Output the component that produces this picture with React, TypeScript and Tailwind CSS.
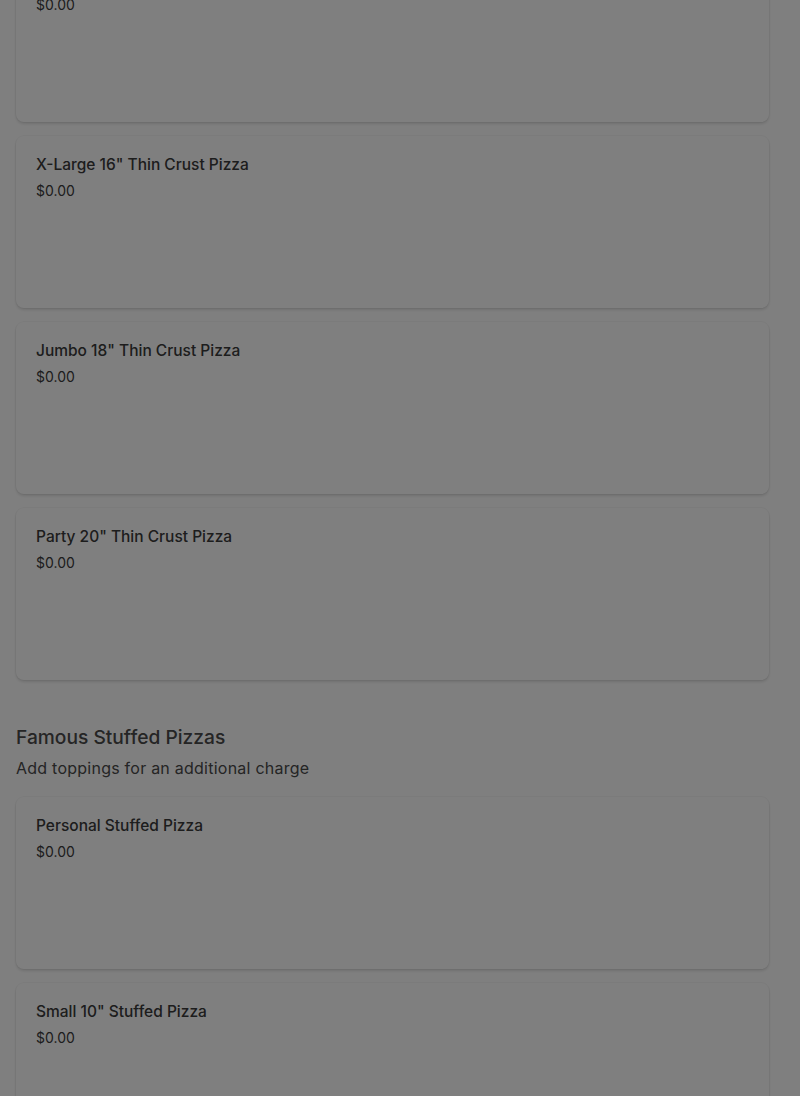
import React from 'react'

const font = { fontFamily: 'Inter, "Open Sans", sans-serif' }

interface Item {
	name: string
	price: string
}

const thinCrust: Item[] = [
	{ name: 'Large 14" Thin Crust Pizza', price: '$0.00' },
	{ name: 'X-Large 16" Thin Crust Pizza', price: '$0.00' },
	{ name: 'Jumbo 18" Thin Crust Pizza', price: '$0.00' },
	{ name: 'Party 20" Thin Crust Pizza', price: '$0.00' },
]

const stuffed: Item[] = [
	{ name: 'Personal Stuffed Pizza', price: '$0.00' },
	{ name: 'Small 10" Stuffed Pizza', price: '$0.00' },
	{ name: 'Medium 12" Stuffed Pizza', price: '$0.00' },
]

function MenuCard({ item }: { item: Item }) {
	return (
		<div className="h-[172px] rounded-lg bg-white px-5 pt-[19px] shadow-[0_2px_3px_rgba(0,0,0,0.12)] ring-1 ring-black/[0.03]">
			<div className="text-[15.5px] leading-5 font-medium text-[#3a3a3a]">{item.name}</div>
			<div className="mt-[6px] text-[14px] leading-5 text-[#3a3a3a]">{item.price}</div>
		</div>
	)
}

export default function App() {
	return (
		<div className="relative h-[1096px] overflow-hidden bg-white" style={font}>
			<div className="-mt-[50px] pl-4 pr-[31px]">
				<div className="flex flex-col gap-[14px]">
					{thinCrust.map((item) => (
						<MenuCard key={item.name} item={item} />
					))}
				</div>

				<div className="mt-[43px]">
					<h2 className="text-[19.2px] leading-7 font-medium text-[#4a4a4a]">Famous Stuffed Pizzas</h2>
					<p className="mt-[5px] text-[16px] leading-6 tracking-[0.015em] text-[#4a4a4a]">Add toppings for an additional charge</p>
				</div>

				<div className="mt-[17px] flex flex-col gap-[14px]">
					{stuffed.map((item) => (
						<MenuCard key={item.name} item={item} />
					))}
				</div>
			</div>

			<div className="fixed inset-0 bg-black/50" />
		</div>
	)
}
